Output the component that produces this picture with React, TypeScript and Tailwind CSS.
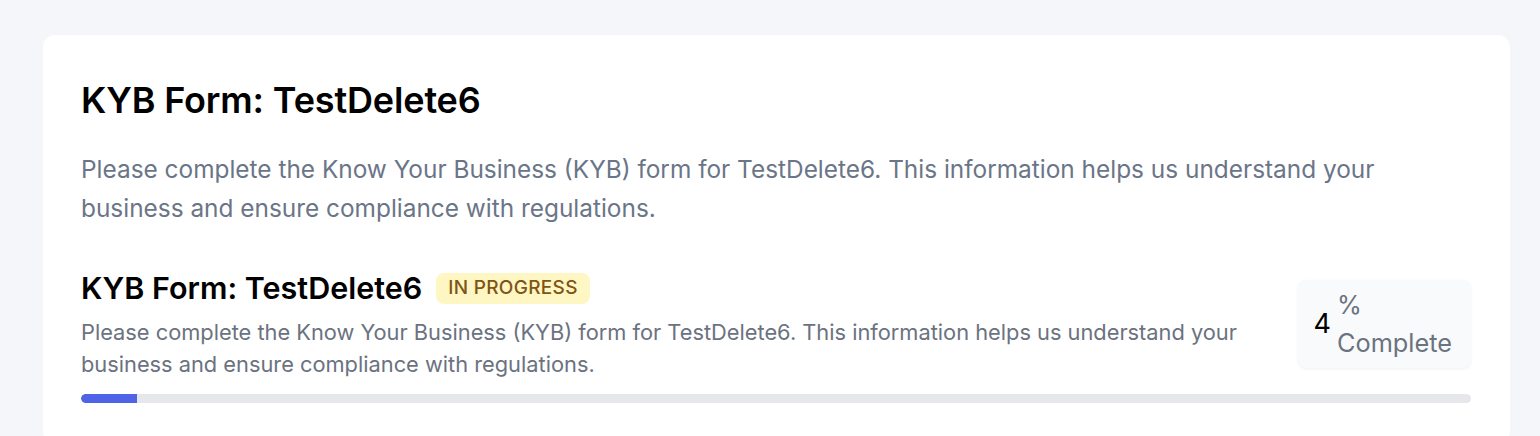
import React from "react";

export default function App() {
  const progress = 4;
  return (
    <div
      className="min-h-[436px] bg-[#f5f6fa] pl-[43px] pr-[30px] pt-[35px]"
      style={{ fontFamily: "Inter, 'Noto Sans', sans-serif" }}
    >
      <div className="rounded-xl bg-white pl-[38px] pr-[39px] pt-[45px] pb-10">
        <h1 className="text-[36px] leading-[40px] font-semibold text-black tracking-[-0.15px]">
          KYB Form: TestDelete6
        </h1>
        <p className="mt-[30px] text-[24.4px] leading-[39px] text-[#6b7588]">
          Please complete the Know Your Business (KYB) form for TestDelete6. This information helps us understand your
          business and ensure compliance with regulations.
        </p>

        <div className="mt-[44px] flex items-start justify-between gap-6">
          <div className="flex-1">
            <div className="flex items-center gap-[14px]">
              <h2 className="text-[30.5px] leading-[32px] font-semibold text-black">
                KYB Form: TestDelete6
              </h2>
              <span className="rounded-lg bg-[#fef7c3] px-[12px] h-[31px] flex items-center text-[19px] font-medium text-[#7f5416] tracking-[0.3px]">
                IN PROGRESS
              </span>
            </div>
            <p className="mt-[12px] text-[21.8px] leading-[32px] text-[#6b7280]">
              Please complete the Know Your Business (KYB) form for TestDelete6. This information helps us understand your
              business and ensure compliance with regulations.
            </p>
          </div>
          <div className="mt-[8px] flex items-center gap-[6px] rounded-lg bg-[#f9fafb] pl-[16px] pr-[19px] py-[6px] shadow-[0_1px_3px_rgba(0,0,0,0.06)]">
            <span className="text-[27px] leading-[38px] text-black">{progress}</span>
            <span className="w-min text-[25.3px] leading-[38px] text-[#6b7280]">% Complete</span>
          </div>
        </div>

        <div className="mt-[14px] h-[9px] w-full overflow-hidden rounded-full bg-[#e5e7eb]">
          <div className="h-full bg-[#4f63e6] rounded-l-full" style={{ width: `${progress}%` }} />
        </div>
      </div>
    </div>
  );
}
